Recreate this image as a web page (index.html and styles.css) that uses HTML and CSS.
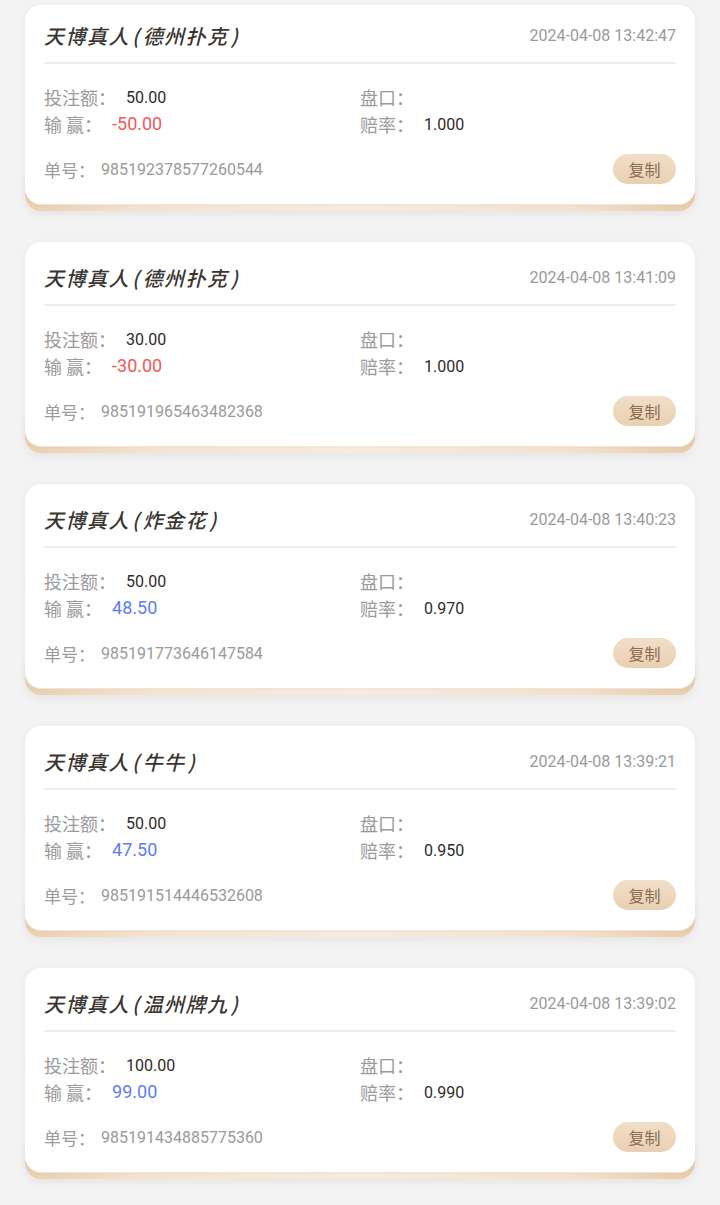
FILE: index.html
```html
<!DOCTYPE html>
<html lang="zh-CN">
<head>
    <meta charset="UTF-8">
    <meta name="viewport" content="width=device-width, initial-scale=1.0">
    <title>投注记录</title>
    <link rel="stylesheet" href="styles.css">
</head>
<body>
    <div class="list">
        <div class="card">
            <div class="card-head">
                <span class="title">天博真人<span class="br">(</span>德州扑克<span class="br">)</span></span>
                <span class="time">2024-04-08 13:42:47</span>
            </div>
            <div class="info">
                <div class="row"><span class="label">投注额：</span><span class="val">50.00</span></div>
                <div class="row"><span class="label">盘口：</span></div>
                <div class="row"><span class="label">输 赢：</span><span class="val big red">-50.00</span></div>
                <div class="row"><span class="label">赔率：</span><span class="val">1.000</span></div>
            </div>
            <div class="order">
                <span class="label">单号：</span><span class="num">985192378577260544</span>
                <button class="copy">复制</button>
            </div>
        </div>

        <div class="card">
            <div class="card-head">
                <span class="title">天博真人<span class="br">(</span>德州扑克<span class="br">)</span></span>
                <span class="time">2024-04-08 13:41:09</span>
            </div>
            <div class="info">
                <div class="row"><span class="label">投注额：</span><span class="val">30.00</span></div>
                <div class="row"><span class="label">盘口：</span></div>
                <div class="row"><span class="label">输 赢：</span><span class="val big red">-30.00</span></div>
                <div class="row"><span class="label">赔率：</span><span class="val">1.000</span></div>
            </div>
            <div class="order">
                <span class="label">单号：</span><span class="num">985191965463482368</span>
                <button class="copy">复制</button>
            </div>
        </div>

        <div class="card">
            <div class="card-head">
                <span class="title">天博真人<span class="br">(</span>炸金花<span class="br">)</span></span>
                <span class="time">2024-04-08 13:40:23</span>
            </div>
            <div class="info">
                <div class="row"><span class="label">投注额：</span><span class="val">50.00</span></div>
                <div class="row"><span class="label">盘口：</span></div>
                <div class="row"><span class="label">输 赢：</span><span class="val big blue">48.50</span></div>
                <div class="row"><span class="label">赔率：</span><span class="val">0.970</span></div>
            </div>
            <div class="order">
                <span class="label">单号：</span><span class="num">985191773646147584</span>
                <button class="copy">复制</button>
            </div>
        </div>

        <div class="card">
            <div class="card-head">
                <span class="title">天博真人<span class="br">(</span>牛牛<span class="br">)</span></span>
                <span class="time">2024-04-08 13:39:21</span>
            </div>
            <div class="info">
                <div class="row"><span class="label">投注额：</span><span class="val">50.00</span></div>
                <div class="row"><span class="label">盘口：</span></div>
                <div class="row"><span class="label">输 赢：</span><span class="val big blue">47.50</span></div>
                <div class="row"><span class="label">赔率：</span><span class="val">0.950</span></div>
            </div>
            <div class="order">
                <span class="label">单号：</span><span class="num">985191514446532608</span>
                <button class="copy">复制</button>
            </div>
        </div>

        <div class="card">
            <div class="card-head">
                <span class="title">天博真人<span class="br">(</span>温州牌九<span class="br">)</span></span>
                <span class="time">2024-04-08 13:39:02</span>
            </div>
            <div class="info">
                <div class="row"><span class="label">投注额：</span><span class="val">100.00</span></div>
                <div class="row"><span class="label">盘口：</span></div>
                <div class="row"><span class="label">输 赢：</span><span class="val big blue">99.00</span></div>
                <div class="row"><span class="label">赔率：</span><span class="val">0.990</span></div>
            </div>
            <div class="order">
                <span class="label">单号：</span><span class="num">985191434885775360</span>
                <button class="copy">复制</button>
            </div>
        </div>
    </div>
</body>
</html>
```

FILE: styles.css
```css
body {
    margin: 0;
    padding: 0;
    background: #f3f3f3;
    font-family: Roboto, "Noto Sans CJK SC", sans-serif;
    color: #333;
}

.list {
    position: relative;
    z-index: 0;
    padding: 5px 25px 0;
}

.card {
    position: relative;
    background: #fff;
    border-radius: 16px;
    padding: 0 19px 20px;
    margin-bottom: 38px;
    box-shadow: 0 0 6px rgba(0, 0, 0, 0.05), 0 1px 0 #f3ebe2;
}

/* beige layer peeking out under each card */
.card::after {
    content: "";
    position: absolute;
    left: 0;
    right: 0;
    bottom: -7px;
    height: 40px;
    border-radius: 0 0 16px 16px;
    background: linear-gradient(90deg, #ebcfae, #f5e3d0 18%, #f8ebde 50%, #f4e1cd 82%, #e9cba8);
    box-shadow: 0 4px 8px rgba(0, 0, 0, 0.06);
    z-index: -1;
}

.card-head {
    display: flex;
    justify-content: space-between;
    align-items: center;
    padding: 22px 0 12px;
    border-bottom: 2px solid #ececec;
}

.card:first-child .card-head {
    padding-top: 17px;
}

.title {
    font-family: "Noto Sans CJK SC", sans-serif;
    font-size: 20px;
    line-height: 28px;
    font-weight: 500;
    font-style: italic;
    letter-spacing: 1.5px;
    color: #3a3531;
}

.title .br {
    padding: 0 2px;
}

.time {
    font-size: 16px;
    line-height: 28px;
    color: #9a9a9a;
}

.info {
    display: grid;
    grid-template-columns: 316px 1fr;
    margin-top: 19px;
}

.row {
    display: flex;
    align-items: center;
    height: 27px;
}

.label {
    font-family: "Noto Sans CJK SC", sans-serif;
    font-size: 18px;
    color: #9b9b9b;
}

.val {
    margin-left: 10px;
    padding-top: 2px;
    font-size: 16px;
    color: #2f2b28;
}

.val.big {
    padding-top: 0;
    font-size: 18px;
}

.red {
    color: #f5575b;
}

.blue {
    color: #5e7cf6;
}

.order {
    display: flex;
    align-items: center;
    margin-top: 17px;
    height: 30px;
}

.order .label {
    font-size: 17px;
}

.num {
    margin-left: 6px;
    font-size: 16px;
    color: #9a9a9a;
}

.copy {
    margin-left: auto;
    width: 63px;
    height: 30px;
    padding: 0;
    border: none;
    border-radius: 15px;
    background: linear-gradient(180deg, #f1dec8, #e9d0b2);
    color: #8a6a52;
    font-family: "Noto Sans CJK SC", sans-serif;
    font-size: 16px;
    cursor: pointer;
}
```
